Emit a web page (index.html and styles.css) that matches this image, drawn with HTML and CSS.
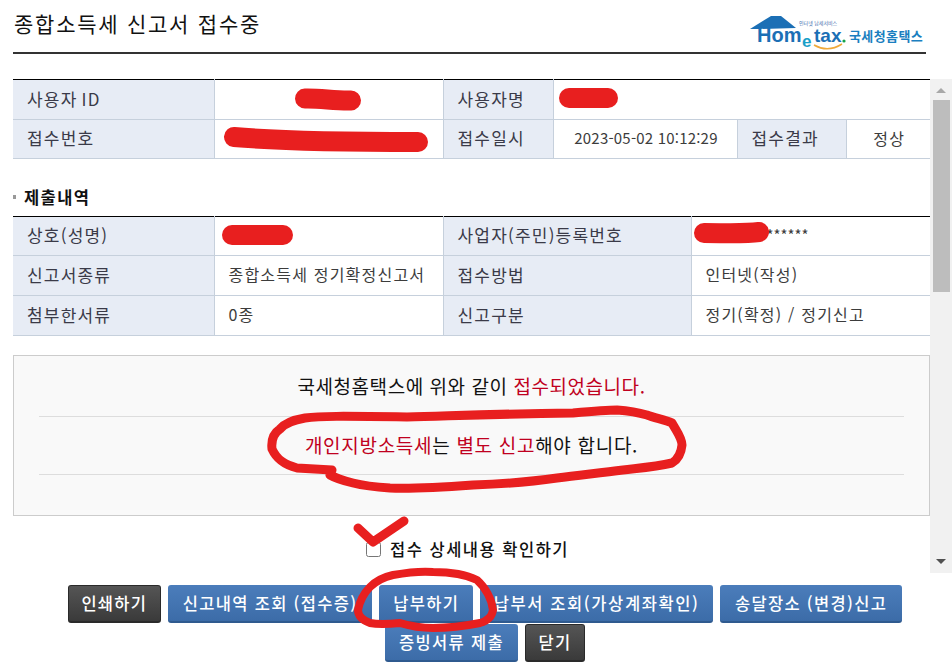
FILE: index.html
```html
<!DOCTYPE html>
<html lang="ko">
  <head>
    <meta charset="UTF-8" />
    <meta name="viewport" content="width=device-width, initial-scale=1.0" />
    <title>종합소득세 신고서 접수증</title>
    <link rel="stylesheet" href="styles.css">
  </head>
  <body>
    <header class="top">
      <h1>종합소득세 신고서 접수중</h1>
      <svg class="logo" width="175" height="36" viewBox="0 0 175 36">
        <path d="M0 14 L21 1 L31 1 L46 13 L8 14 Z" fill="#1b6fb5" />
        <path d="M64 30 Q78 38 92 29" fill="none" stroke="#f0a93a" stroke-width="1.5" />
        <text class="logo-small" x="49" y="10">인터넷 납세서비스</text>
        <text class="logo-home" x="7" y="27">Hom</text>
        <text class="logo-e" x="52" y="32">e</text>
        <text class="logo-tax" x="64" y="27">tax</text>
        <circle cx="94" cy="26" r="1.6" fill="#16a34a" />
        <text class="logo-name" x="99" y="26">국세청홈택스</text>
      </svg>
    </header>

    <div class="pane">
      <main class="pane-body">
        <table class="info info-top">
          <colgroup>
            <col class="c-201" /><col class="c-229" /><col class="c-110" /><col class="c-184" /><col class="c-109" /><col />
          </colgroup>
          <tr>
            <th>사용자 ID</th>
            <td></td>
            <th>사용자명</th>
            <td colspan="3"></td>
          </tr>
          <tr class="short">
            <th>접수번호</th>
            <td></td>
            <th>접수일시</th>
            <td class="center date">2023-05-02 10:12:29</td>
            <th>접수결과</th>
            <td class="center">정상</td>
          </tr>
        </table>

        <h2 class="section"><span class="bullet"></span>제출내역</h2>

        <table class="info">
          <colgroup>
            <col class="c-201" /><col class="c-229" /><col class="c-248" /><col />
          </colgroup>
          <tr class="short">
            <th>상호(성명)</th>
            <td></td>
            <th>사업자(주민)등록번호</th>
            <td class="masked">******</td>
          </tr>
          <tr>
            <th>신고서종류</th>
            <td>종합소득세 정기확정신고서</td>
            <th>접수방법</th>
            <td>인터넷(작성)</td>
          </tr>
          <tr>
            <th>첨부한서류</th>
            <td>0종</td>
            <th>신고구분</th>
            <td>정기(확정) / 정기신고</td>
          </tr>
        </table>

        <section class="notice">
          <p class="notice-line">국세청홈택스에 위와 같이 <em>접수되었습니다.</em></p>
          <p class="notice-line second"><em>개인지방소득세</em>는 <em>별도 신고</em>해야 합니다.</p>
        </section>

        <label class="confirm"><input type="checkbox" /> 접수 상세내용 확인하기</label>
      </main>

      <div class="scrollbar">
        <span class="arrow up"></span>
        <div class="thumb"></div>
        <span class="arrow down"></span>
      </div>
    </div>

    <nav class="actions">
      <a class="btn dark">인쇄하기</a>
      <a class="btn wide">신고내역 조회 (접수증)</a>
      <a class="btn">납부하기</a>
      <a class="btn long">납부서 조회(가상계좌확인)</a>
      <a class="btn wide">송달장소 (변경)신고</a>
      <a class="btn">증빙서류 제출</a>
      <a class="btn dark">닫기</a>
    </nav>

    <!-- marker strokes drawn over the screenshot -->
    <svg class="marks" width="952" height="667" viewBox="0 0 952 667">
      <g fill="none" stroke="#e81f1f" stroke-linecap="round" stroke-linejoin="round">
        <path stroke-width="20" d="M305 98.5 C320 98 335 101 351 100.5" />
        <path stroke-width="20" d="M569 98 L608 98" />
        <path stroke-width="20" d="M234 137 C280 141 340 142 418 142" />
        <path stroke-width="20" d="M232 235 L283 235" />
        <path stroke-width="20" d="M704 233 C725 233 745 234 759 232" />
        <path stroke-width="9" d="M332 470 L297 468 C285 465 277 460 272 449 C271 440 274 433 280 429 C285 423 293 420 305 418 C320 416 340 416 407 417 C450 416 490 414 573 413 C595 411 610 410 617 410 C630 411 640 413 647 415 C655 418 665 420 672 423 C677 432 682 438 682 445 C681 455 677 460 672 463 C655 467 640 468 623 470 C600 473 580 475 557 478 C530 482 500 484 473 485 C445 487 415 489 390 488 C375 487 365 486 353 483 C345 481 337 479 330 475 Z" />
        <path stroke-width="9" d="M358 528 L373 542 L404 521" />
        <path stroke-width="8" d="M400 623 C390 624 380 625 370 623 C362 620 358 615 358 610 C360 600 364 593 370 587 C376 581 384 577 393 575 C410 572 422 571 433 572 C450 572 465 574 477 580 C486 588 492 600 493 610 C492 617 487 621 480 623 C465 626 450 628 433 628 C420 628 410 626 400 623 Z" />
      </g>
    </svg>
  </body>
</html>
```

FILE: styles.css
```css
body {
  margin: 0;
  height: 667px;
  overflow: hidden;
  position: relative;
  background: #fff;
  color: #333;
  font-family: "Noto Sans CJK KR", "Noto Sans", sans-serif;
  font-size: 16px;
}

.top {
  display: flex;
  justify-content: space-between;
  align-items: flex-end;
  height: 52px;
  margin: 0 26px 25px 13px;
  border-bottom: 2px solid #333;
}

.top h1 {
  margin: 0 0 17px 1px;
  font-size: 21px;
  font-weight: 400;
  line-height: 24px;
  letter-spacing: 1.75px;
  color: #111;
}

.logo {
  margin: 0 1px 1px 0;
}

.logo text {
  font-family: "Liberation Sans", sans-serif;
  font-weight: 700;
}

.logo-home {
  font-size: 20px;
  fill: #1b6fb5;
}

.logo-tax {
  font-size: 19px;
  fill: #1b6fb5;
}

.logo-e {
  font-size: 17px;
  fill: #1aa0c8;
}

.logo .logo-small {
  font-family: "Noto Sans CJK KR", sans-serif;
  font-size: 5px;
  font-weight: 400;
  fill: #3f6fae;
}

.logo .logo-name {
  font-family: "Noto Sans CJK KR", sans-serif;
  font-size: 13px;
  letter-spacing: 0.4px;
  fill: #1b7fc0;
}

.pane {
  display: flex;
  height: 494px;
}

.pane-body {
  width: 917px;
  margin-left: 13px;
}

.info {
  width: 917px;
  table-layout: fixed;
  border-collapse: collapse;
  border-top: 1px solid #000;
}

.c-201 { width: 201px; }
.c-229 { width: 229px; }
.c-110 { width: 110px; }
.c-184 { width: 184px; }
.c-109 { width: 109px; }
.c-248 { width: 248px; }

.info tr {
  height: 40px;
}

.info tr.short {
  height: 39px;
}

.info th,
.info td {
  padding: 0 0 3px 14px;
  border: 1px solid #c6d0dc;
  border-top: 0;
  text-align: left;
  font-weight: 400;
  white-space: nowrap;
}

.info th:first-child {
  border-left: 0;
}

.info tr > :last-child {
  border-right: 0;
}

.info th {
  background: #e7ecf5;
  font-size: 17px;
  letter-spacing: 1.2px;
  word-spacing: -2px;
  color: #3a3a48;
}

.info td {
  letter-spacing: 1.2px;
  color: #3c3c3c;
}

.info td.center {
  padding-left: 2px;
  text-align: center;
}

.info td.date {
  font-size: 15px;
  letter-spacing: 0.2px;
}

.info td.masked {
  padding-left: 75px;
  letter-spacing: 0;
  font-size: 15px;
}

.section {
  display: flex;
  align-items: center;
  height: 57px;
  margin: 0;
  padding-top: 18px;
  box-sizing: border-box;
  font-size: 16.5px;
  font-weight: 700;
  letter-spacing: 1.4px;
  color: #111;
}

.bullet {
  width: 3px;
  height: 4px;
  margin-right: 8px;
  background: #999;
}

.notice {
  margin-top: 19px;
  height: 159px;
  padding: 0 25px;
  background: #f9f9f9;
  border: 1px solid #ccc;
}

.notice-line {
  display: flex;
  align-items: center;
  justify-content: center;
  margin: 0;
  height: 61px;
  padding-bottom: 2px;
  box-sizing: border-box;
  font-size: 19px;
  letter-spacing: 0.55px;
  color: #111;
  white-space: pre-wrap;
  border-bottom: 1px solid #ddd;
}

.notice-line.second {
  height: 58px;
  letter-spacing: 0.7px;
}

.notice-line em {
  font-style: normal;
  color: #c00020;
}

.confirm {
  display: flex;
  justify-content: center;
  align-items: center;
  gap: 9px;
  height: 66px;
  padding: 0 8px 0 0;
  box-sizing: border-box;
  font-size: 16.5px;
  font-weight: 500;
  letter-spacing: 1.5px;
  color: #111;
}

.confirm input {
  width: 15px;
  height: 15px;
  margin: 0;
}

.scrollbar {
  display: flex;
  flex-direction: column;
  align-items: center;
  width: 22px;
  background: #f1f1f1;
}

.arrow {
  width: 0;
  height: 0;
  border-left: 5px solid transparent;
  border-right: 5px solid transparent;
}

.arrow.up {
  margin-top: 9px;
  border-bottom: 5px solid #a8a8a8;
}

.arrow.down {
  margin-top: auto;
  margin-bottom: 9px;
  border-top: 5px solid #505050;
}

.thumb {
  width: 17px;
  height: 192px;
  margin-top: 7px;
  background: #bdbdbd;
}

.actions {
  display: flex;
  flex-wrap: wrap;
  justify-content: center;
  gap: 1px 7px;
  width: 860px;
  margin: 12px 0 0 55px;
}

.btn {
  box-sizing: border-box;
  height: 38px;
  line-height: 36px;
  padding: 0 14px;
  border-radius: 3px;
  border-bottom: 2px solid #2f5a8f;
  background: linear-gradient(#4b7dbb, #3c6ca8);
  color: #fff;
  font-size: 16.5px;
  font-weight: 500;
  letter-spacing: 1.3px;
  white-space: nowrap;
}

.btn.wide {
  padding: 0 15px;
}

.btn.long {
  padding: 0 13.5px;
  letter-spacing: 1.6px;
}

.btn.dark {
  border: 1px solid #2a2a2a;
  border-bottom-width: 2px;
  padding: 0 12.5px;
  line-height: 34px;
  background: linear-gradient(#555, #3a3a3a);
}

.marks {
  position: absolute;
  left: 0;
  top: 0;
  pointer-events: none;
}
```
